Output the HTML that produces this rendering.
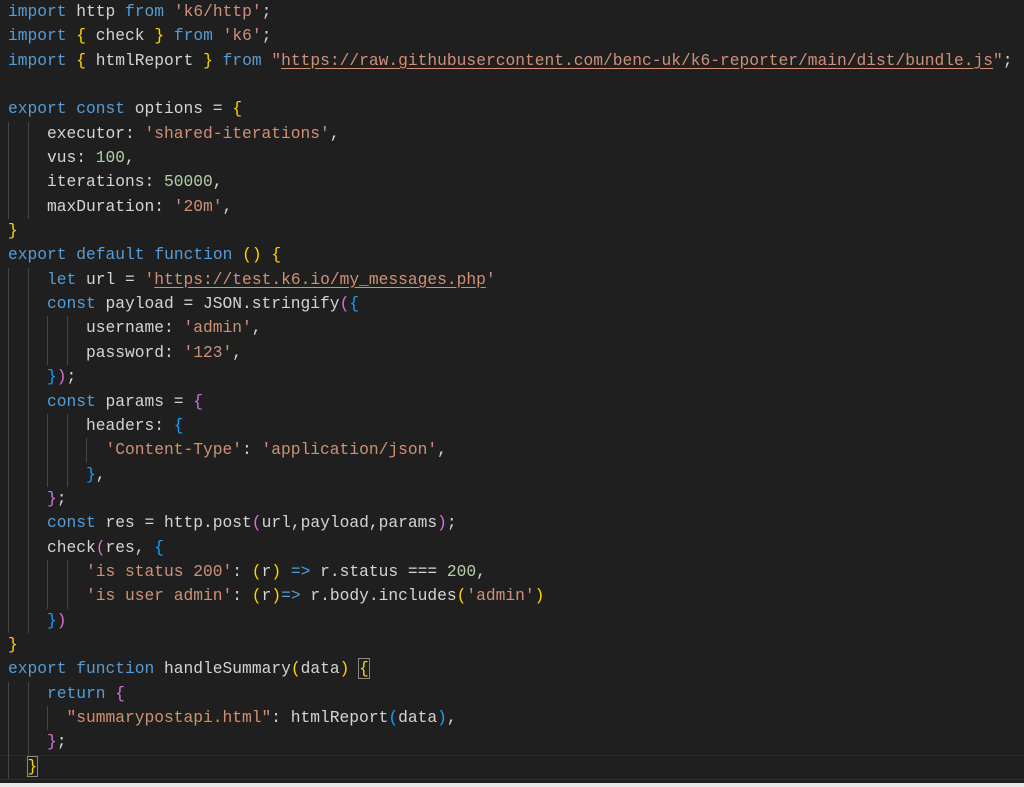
<!DOCTYPE html>
<html><head><meta charset="utf-8"><style>
html,body{margin:0;padding:0;background:#1f1f1f;width:1024px;height:787px;overflow:hidden}
pre{margin:0;position:absolute;left:8px;top:0;font-family:"Liberation Mono",monospace;font-size:16.26px;line-height:24.35px;color:#d4d4d4;white-space:pre}
.g{display:inline-block;width:2ch;border-left:1px solid #454545;box-sizing:border-box;height:24.35px;vertical-align:top;margin-left:0}
.s0{display:inline-block;width:2ch}
.k{color:#569cd6}.s{color:#ce9178}.n{color:#b5cea8}.y{color:#ffd700}.p{color:#da70d6}.b{color:#179fff}
.u{text-decoration:underline;text-underline-offset:3px}
.cur{outline:1px solid #888}
.bot{position:absolute;left:0;top:783px;width:1024px;height:4px;background:#e8e8e8}
.hl{position:absolute;left:0;top:755px;width:1024px;height:25px;border-top:1px solid #2c2c2c;border-bottom:1px solid #2c2c2c;box-sizing:border-box}
</style></head><body>
<div class="hl"></div>
<pre><span class="k">import</span> http <span class="k">from</span> <span class="s">'k6/http'</span>;
<span class="k">import</span> <span class="y">{</span> check <span class="y">}</span> <span class="k">from</span> <span class="s">'k6'</span>;
<span class="k">import</span> <span class="y">{</span> htmlReport <span class="y">}</span> <span class="k">from</span> <span class="s">"<span class="u">https://raw.githubusercontent.com/benc-uk/k6-reporter/main/dist/bundle.js</span>"</span>;

<span class="k">export</span> <span class="k">const</span> options = <span class="y">{</span>
<span class="g"></span><span class="g"></span>executor: <span class="s">'shared-iterations'</span>,
<span class="g"></span><span class="g"></span>vus: <span class="n">100</span>,
<span class="g"></span><span class="g"></span>iterations: <span class="n">50000</span>,
<span class="g"></span><span class="g"></span>maxDuration: <span class="s">'20m'</span>,
<span class="y">}</span>
<span class="k">export</span> <span class="k">default</span> <span class="k">function</span> <span class="y">()</span> <span class="y">{</span>
<span class="g"></span><span class="g"></span><span class="k">let</span> url = <span class="s">'<span class="u">https://test.k6.io/my_messages.php</span>'</span>
<span class="g"></span><span class="g"></span><span class="k">const</span> payload = JSON.stringify<span class="p">(</span><span class="b">{</span>
<span class="g"></span><span class="g"></span><span class="g"></span><span class="g"></span>username: <span class="s">'admin'</span>,
<span class="g"></span><span class="g"></span><span class="g"></span><span class="g"></span>password: <span class="s">'123'</span>,
<span class="g"></span><span class="g"></span><span class="b">}</span><span class="p">)</span>;
<span class="g"></span><span class="g"></span><span class="k">const</span> params = <span class="p">{</span>
<span class="g"></span><span class="g"></span><span class="g"></span><span class="g"></span>headers: <span class="b">{</span>
<span class="g"></span><span class="g"></span><span class="g"></span><span class="g"></span><span class="g"></span><span class="s">'Content-Type'</span>: <span class="s">'application/json'</span>,
<span class="g"></span><span class="g"></span><span class="g"></span><span class="g"></span><span class="b">}</span>,
<span class="g"></span><span class="g"></span><span class="p">}</span>;
<span class="g"></span><span class="g"></span><span class="k">const</span> res = http.post<span class="p">(</span>url,payload,params<span class="p">)</span>;
<span class="g"></span><span class="g"></span>check<span class="p">(</span>res, <span class="b">{</span>
<span class="g"></span><span class="g"></span><span class="g"></span><span class="g"></span><span class="s">'is status 200'</span>: <span class="y">(</span>r<span class="y">)</span> <span class="k">=&gt;</span> r.status === <span class="n">200</span>,
<span class="g"></span><span class="g"></span><span class="g"></span><span class="g"></span><span class="s">'is user admin'</span>: <span class="y">(</span>r<span class="y">)</span><span class="k">=&gt;</span> r.body.includes<span class="y">(</span><span class="s">'admin'</span><span class="y">)</span>
<span class="g"></span><span class="g"></span><span class="b">}</span><span class="p">)</span>
<span class="y">}</span>
<span class="k">export</span> <span class="k">function</span> handleSummary<span class="y">(</span>data<span class="y">)</span> <span class="y cur">{</span>
<span class="g"></span><span class="g"></span><span class="k">return</span> <span class="p">{</span>
<span class="g"></span><span class="g"></span><span class="g"></span><span class="s">"summarypostapi.html"</span>: htmlReport<span class="b">(</span>data<span class="b">)</span>,
<span class="g"></span><span class="g"></span><span class="p">}</span>;
<span class="g"></span><span class="y cur">}</span></pre>
<div class="bot"></div>
</body></html>
